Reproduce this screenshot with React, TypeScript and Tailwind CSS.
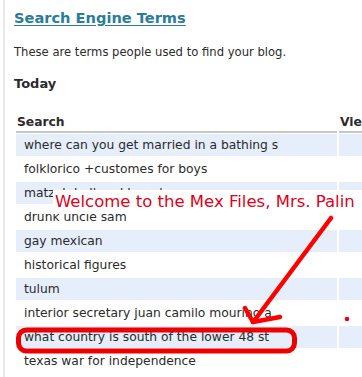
import React from "react";

const rows = [
  "where can you get married in a bathing s",
  "folklorico +customes for boys",
  "matzah ball and bread",
  "drunk uncle sam",
  "gay mexican",
  "historical figures",
  "tulum",
  "interior secretary juan camilo mourino a",
  "what country is south of the lower 48 st",
  "texas war for independence",
];

export default function App() {
  return (
    <div className="relative w-[362px] h-[377px] overflow-hidden bg-white font-['DejaVu_Sans',sans-serif] text-[#2b2b2b]">
      <div className="h-full pl-[3px]">
        <div className="h-full border-l-2 border-[#e8e8e8] pl-[9px] pt-[9px]">
          <div className="h-[18px] text-[14.6px] leading-[18px] font-bold text-[#2b7c9c] underline underline-offset-2 whitespace-nowrap">
            Search Engine Terms
          </div>
          <div className="mt-[18px] h-[14px] text-[11.6px] leading-[14px] whitespace-nowrap">
            These are terms people used to find your blog.
          </div>
          <div className="mt-[17px] h-[16px] text-[13px] leading-[16px] font-bold whitespace-nowrap">
            Today
          </div>
          <div className="ml-[2px] mt-[21px] w-[400px]">
            <div className="flex gap-[2px]">
              <div className="shrink-0 w-[321px] h-[20px] border-b-2 border-[#c6c6c6] pl-px text-[12.3px] leading-[18px] font-bold">
                Search
              </div>
              <div className="shrink-0 w-[40px] h-[20px] border-b-2 border-[#c6c6c6] pl-px text-[12.3px] leading-[18px] font-bold whitespace-nowrap">
                Views
              </div>
            </div>
            <div className="mt-px flex flex-col gap-[2px]">
              {rows.map((r, i) => (
                <div key={i} className="flex gap-[2px]">
                  <div
                    className={`shrink-0 w-[321px] h-[22px] pl-[8px] text-[12.3px] leading-[22px] whitespace-nowrap overflow-hidden ${
                      i % 2 === 0 ? "bg-[#e5eefa]" : "bg-white"
                    }`}
                  >
                    {r}
                  </div>
                  <div className={`shrink-0 w-[40px] h-[22px] ${i % 2 === 0 ? "bg-[#e5eefa]" : "bg-white"}`} />
                </div>
              ))}
            </div>
          </div>
        </div>
      </div>

      <div className="absolute left-[53px] top-[190px] w-[309px] h-[24px] bg-white pl-[2px] font-['DejaVu_Sans',sans-serif] text-[16.5px] leading-[24px] text-[#e0001a] whitespace-nowrap">
        Welcome to the Mex Files, Mrs. Palin
      </div>

      <svg className="absolute left-0 top-0" width="362" height="377" viewBox="0 0 362 377">
        <g stroke="#f00" strokeWidth="4.5" strokeLinecap="round" fill="none">
          <line x1="331" y1="218" x2="254" y2="321" />
          <line x1="253" y1="322" x2="245" y2="308" />
          <line x1="253" y1="322" x2="280" y2="317" />
        </g>
        <rect x="18.5" y="330" width="276" height="21" rx="8" stroke="#ee0000" strokeWidth="5" fill="none" />
        <circle cx="347" cy="319" r="2.3" fill="#ee0022" />
      </svg>
    </div>
  );
}
